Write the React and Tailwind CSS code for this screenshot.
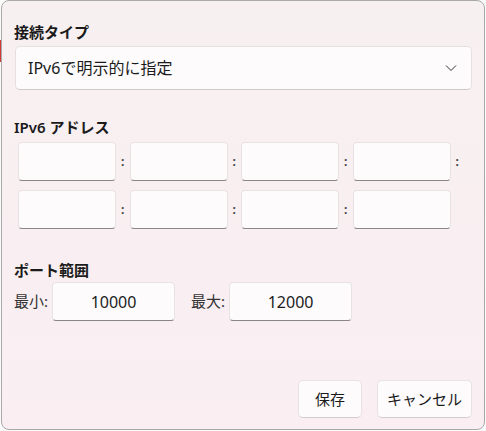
import React from 'react';

const font = { fontFamily: '"Noto Sans", "Noto Sans CJK JP", sans-serif' };

function Box({ className = '', children }) {
  return (
    <div
      className={`h-[39px] rounded-[4px] border border-[#e8e2e3] border-b-[#8a8686] bg-[#fdfbfc] flex items-center justify-center text-[16px] text-[#1c1c1c] ${className}`}
    >
      {children}
    </div>
  );
}

function Colon() {
  return <div className="w-[13.5px] text-center text-[12px] leading-none text-[#444] font-bold">:</div>;
}

function AddrRow({ trailing }) {
  return (
    <div className="flex items-center pl-[16px]">
      <Box className="w-[98px]" />
      <Colon />
      <Box className="w-[98px]" />
      <Colon />
      <Box className="w-[98px]" />
      <Colon />
      <Box className="w-[98px]" />
      {trailing && <Colon />}
    </div>
  );
}

export default function App() {
  return (
    <div className="w-[486px] h-[431px] bg-[#fbfbfb] relative overflow-hidden" style={font}>
      <div className="absolute left-0 top-[40px] w-[1px] h-[22px] bg-[#d23a3a]" />
      <div className="ml-[1px] w-[484px] h-[430px] rounded-[8px] border border-[#a9a9a9] bg-gradient-to-b from-[#f7f0f0] to-[#faeef3] flex flex-col pt-[20px] pl-[12px] pr-[12px] text-[#1b1b1b]">
        <div className="text-[15px] leading-[22px] font-semibold">接続タイプ</div>
        <div className="mt-[3px] ml-[1px] h-[44px] rounded-[5px] border border-[#e6e0e1] border-b-[#cfc9ca] bg-[#fdfbfc] flex items-center justify-between pl-[12px] pr-[14px]">
          <span className="text-[16px]">IPv6で明示的に指定</span>
          <svg width="12" height="8" viewBox="0 0 12 8" fill="none">
            <polyline points="1,1.5 6,6.5 11,1.5" stroke="#333" strokeWidth="1" />
          </svg>
        </div>

        <div className="mt-[26px] text-[15px] leading-[22px] font-semibold">IPv6 アドレス</div>
        <div className="mt-[4px] flex flex-col gap-[9px] -ml-[12px]">
          <AddrRow trailing />
          <AddrRow />
        </div>

        <div className="mt-[30px] text-[15px] leading-[22px] font-semibold">ポート範囲</div>
        <div className="mt-[1px] flex items-center">
          <span className="text-[15px] text-[#333]">最小:</span>
          <Box className="w-[123px] ml-[4px] h-[38px]">10000</Box>
          <span className="ml-[16px] text-[15px] text-[#333]">最大:</span>
          <Box className="w-[123px] ml-[4px] h-[38px]">12000</Box>
        </div>

        <div className="mt-auto mb-[11px] flex justify-end gap-[15px]">
          <button className="w-[64px] h-[38px] rounded-[5px] border border-[#e8e2e3] border-b-[#d2cccd] bg-[#fdfbfc] text-[15px] text-[#1b1b1b]">
            保存
          </button>
          <button className="w-[95px] h-[38px] rounded-[5px] border border-[#e8e2e3] border-b-[#d2cccd] bg-[#fdfbfc] text-[15px] text-[#1b1b1b]">
            キャンセル
          </button>
        </div>
      </div>
    </div>
  );
}
